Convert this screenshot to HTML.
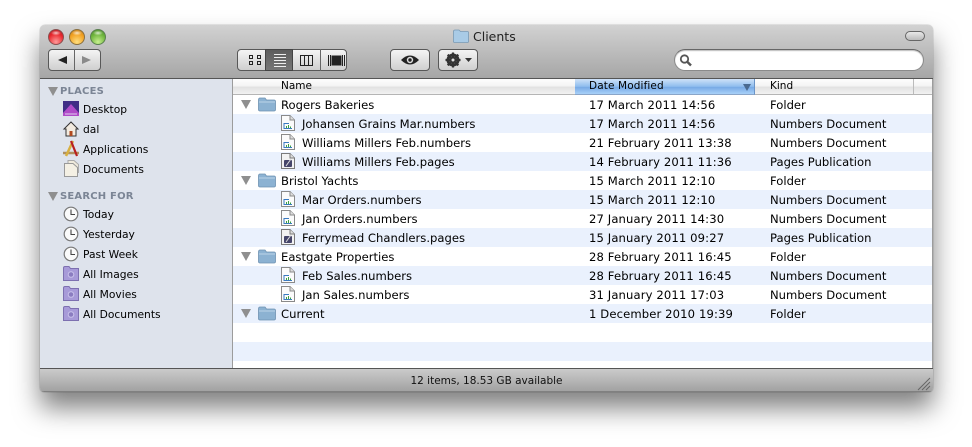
<!DOCTYPE html>
<html><head><meta charset="utf-8">
<style>
html,body{margin:0;padding:0;background:#fff}
body{width:972px;height:447px;overflow:hidden;position:relative;font-family:"DejaVu Sans","Liberation Sans",sans-serif;font-size:11.6px;color:#000}
.a{position:absolute}
#win{left:40px;top:25px;width:893px;height:367px;border-radius:5px 5px 4px 4px;overflow:hidden;box-shadow:0 16px 26px rgba(0,0,0,.5),0 0 1px rgba(0,0,0,.5)}
#top{left:0;top:0;width:893px;height:53px;background:linear-gradient(#d2d2d2,#a6a6a6);border-bottom:1px solid #555}
#side{left:0;top:54px;width:192px;height:289px;background:#dee3ec;border-right:1px solid #9c9c9c}
#main{left:193px;top:54px;width:699px;height:289px;background:#fff}
#edge{left:892px;top:54px;width:1px;height:289px;background:#9c9c9c}
#bot{left:0;top:343px;width:893px;height:24px;background:linear-gradient(#cbcbcb,#a2a2a2);border-top:1px solid #555;box-sizing:border-box;border-bottom:1px solid #808080}
.t{position:absolute;white-space:nowrap;line-height:14px}
#main .t{margin-top:1px}
#main .t[style*="left:356px"]{letter-spacing:.12px}
#side .t{font-size:10.7px;margin-top:1px}
#side .h{font-weight:bold;color:#7b8595;font-size:10px;letter-spacing:.2px;margin-top:1px}
.tri{position:absolute;width:0;height:0;border-left:5px solid transparent;border-right:5px solid transparent;border-top:9px solid #8f8f8f}
.btn{position:absolute;box-sizing:border-box;height:22px;top:24px;border:1px solid #585858;border-radius:4px;background:linear-gradient(#f4f4f4,#cfcfcf)}
.row{position:absolute;left:0;width:699px;height:19px}
.b{background:#eaf1fd}
svg{position:absolute;overflow:visible}
</style></head><body>
<div class="a" id="win">
<div class="a" id="top">
 <div class="a" style="left:8px;top:4px;width:14px;height:14px;border-radius:50%;background:radial-gradient(ellipse 5px 2.5px at 50% 3px,rgba(255,255,255,.75),rgba(255,255,255,0)),radial-gradient(circle at 50% 85%,#ff9a9a,#e8262c 60%,#a82028);border:.5px solid #8a5050;margin-left:-.5px"></div>
 <div class="a" style="left:29px;top:4px;width:14px;height:14px;border-radius:50%;background:radial-gradient(ellipse 5px 2.5px at 50% 3px,rgba(255,255,255,.75),rgba(255,255,255,0)),radial-gradient(circle at 50% 85%,#ffdf80,#f2a020 60%,#b87a20);border:.5px solid #8a7040;margin-left:-.5px"></div>
 <div class="a" style="left:50px;top:4px;width:14px;height:14px;border-radius:50%;background:radial-gradient(ellipse 5px 2.5px at 50% 3px,rgba(255,255,255,.75),rgba(255,255,255,0)),radial-gradient(circle at 50% 85%,#c8f090,#6cb33a 60%,#4f8a30);border:.5px solid #5a8050;margin-left:-.5px"></div>
 <svg style="left:413px;top:4px" width="16" height="14"><path d="M.5 2.5Q.5 1 2 1H6L7.5 2.5H14.5Q15.5 2.500 15.5 3.500V12.5Q15.5 13.5 14.5 13.5H1.5Q.5 13.5 .5 12.5Z" fill="#a9cbe6" stroke="#7a9ab5" stroke-width=".8"/></svg>
 <div class="t" style="left:433px;top:5px;font-size:12.5px;color:#222">Clients</div>
 <div class="a" style="left:865px;top:6px;width:18px;height:8px;border:1px solid #666;border-radius:5px;background:linear-gradient(#e8e8e8,#bbb)"></div>

 <div class="btn" style="left:8px;width:53px"></div>
 <div class="a" style="left:34px;top:24px;width:1px;height:22px;background:#666"></div>
 <svg style="left:18px;top:29px" width="12" height="12"><path d="M0 6L9 2V10Z" fill="#222"/></svg>
 <svg style="left:42px;top:29px" width="12" height="12"><path d="M9 6L0 2V10Z" fill="#8a8a8a"/></svg>

 <div class="btn" style="left:197px;width:110px"></div>
 <div class="a" style="left:225px;top:24px;width:28px;height:22px;background:linear-gradient(#5c5c5c,#777);box-shadow:inset 0 0 0 1px #444"></div>
 <div class="a" style="left:280px;top:24px;width:1px;height:22px;background:#666"></div>
 <svg style="left:197px;top:24px" width="110" height="22" fill="none" stroke-width="1" shape-rendering="crispEdges">
  <g stroke="#222"><rect x="12.5" y="6.5" width="3" height="3"/><rect x="20.5" y="6.5" width="3" height="3"/><rect x="12.5" y="12.5" width="3" height="3"/><rect x="20.5" y="12.5" width="3" height="3"/></g>
  <path stroke="#eee" d="M37 5.5H49M37 8.5H49M37 11.5H49M37 14.5H49M37 17.5H49"/>
  <g stroke="#222"><rect x="63.5" y="6.5" width="12" height="10"/><path d="M67.5 6.5V16.5M71.5 6.5V16.5"/></g>
  <g stroke="#222"><path d="M91.5 6V17M93.5 6V17M105.5 6V17M107.5 6V17"/><rect x="95" y="7" width="9" height="9" fill="#222"/></g>
 </svg>

 <div class="btn" style="left:350px;width:40px"></div>
 <svg style="left:350px;top:24px" width="40" height="22"><path d="M11 11Q20 2 29 11Q20 20 11 11Z" fill="#222"/><circle cx="20" cy="11" r="3.2" fill="#ddd"/><circle cx="20" cy="11" r="1.7" fill="#222"/></svg>
 <div class="btn" style="left:398px;width:40px"></div>
 <svg style="left:398px;top:24px" width="40" height="22"><circle cx="15" cy="11" r="5" fill="none" stroke="#333" stroke-width="3"/><path d="M15 3.5V18.5M7.5 11H22.500M9.700 5.700L20.300 16.300M20.300 5.700L9.700 16.300" stroke="#333" stroke-width="2.200"/><circle cx="15" cy="11" r="1.500" fill="#ddd"/><path d="M27 9H34L30.500 13Z" fill="#333"/></svg>

 <div class="a" style="left:634px;top:24px;width:250px;height:22px;box-sizing:border-box;border-radius:11px;background:#fff;border:1px solid #8a8a8a;border-top-color:#666;box-shadow:inset 0 1px 1px #bbb"></div>
 <svg style="left:638px;top:28px" width="16" height="15" fill="none" stroke="#555"><circle cx="6.500" cy="6" r="3.700" stroke-width="1.800"/><path d="M9.500 9L13 12.500" stroke-width="2.400"/></svg>
</div>

<div class="a" id="side">
 <div class="tri" style="left:8px;top:8px"></div>
 <div class="t h" style="left:20px;top:5px">PLACES</div>

 <svg style="left:23px;top:22px" width="16" height="16"><rect width="16" height="15" fill="#3f2d86"/><path d="M0 12L8 3L16 12V15H0Z" fill="#b04cc8"/><path d="M2 13H14" stroke="#e0d0f0"/></svg>
 <div class="t" style="left:43px;top:23px">Desktop</div>

 <svg style="left:23px;top:42px" width="16" height="16"><path d="M8 1L1 8H3V15H13V8H15Z" fill="#f2ebe0" stroke="#333"/><rect x="6.500" y="10" width="3" height="5" fill="#b04a20"/></svg>
 <div class="t" style="left:43px;top:43px">dal</div>

 <svg style="left:22px;top:61px" width="18" height="17"><path d="M1 13H17" stroke="#b09060" stroke-width="2.500"/><path d="M4 16L11 1" stroke="#d8b040" stroke-width="2.500"/><path d="M9 1L15 16" stroke="#b82020" stroke-width="2.200"/></svg>
 <div class="t" style="left:43px;top:63px">Applications</div>

 <svg style="left:24px;top:81px" width="15" height="17"><path d="M4 3V.5H10L14.500 4.500V13" fill="#efeadc" stroke="#aaa"/><path d="M.5 3.500H9L13.500 7.500V16.500H.5Z" fill="#f4f0e4" stroke="#999"/></svg>
 <div class="t" style="left:43px;top:83px">Documents</div>

 <div class="tri" style="left:8px;top:113px"></div>
 <div class="t h" style="left:20px;top:110px">SEARCH FOR</div>

 <svg style="left:23px;top:127px" width="16" height="16"><use href="#clk"/></svg>
 <div class="t" style="left:43px;top:128px">Today</div>
 <svg style="left:23px;top:147px" width="16" height="16"><use href="#clk"/></svg>
 <div class="t" style="left:43px;top:148px">Yesterday</div>
 <svg style="left:23px;top:167px" width="16" height="16"><use href="#clk"/></svg>
 <div class="t" style="left:43px;top:168px">Past Week</div>

 <svg style="left:23px;top:187px" width="16" height="15"><use href="#sf"/></svg>
 <div class="t" style="left:43px;top:188px">All Images</div>
 <svg style="left:23px;top:207px" width="16" height="15"><use href="#sf"/></svg>
 <div class="t" style="left:43px;top:208px">All Movies</div>
 <svg style="left:23px;top:227px" width="16" height="15"><use href="#sf"/></svg>
 <div class="t" style="left:43px;top:228px">All Documents</div>
</div>

<div class="a" id="edge"></div>
<div class="a" id="main">
 <div class="a" style="left:0;top:0;width:699px;height:15px;background:linear-gradient(#fdfdfd,#f4f4f4 45%,#e2e2e2 55%,#f2f2f2);border-bottom:1px solid #b5b5b5"></div>
 <div class="a" style="left:342px;top:0;width:179px;height:15px;background:linear-gradient(#cfe2f8,#8fbdee 50%,#78aae6 55%,#a8d0f8);border-bottom:1px solid #8aa5c8;border-right:1px solid #6a94c8"></div>
 <div class="a" style="left:680px;top:0;width:1px;height:15px;background:#bbb"></div>
 <div class="t" style="left:48px;top:-1px;font-size:10.5px">Name</div>
 <div class="t" style="left:356px;top:-1px;font-size:10.5px">Date Modified</div>
 <svg style="left:510px;top:5px" width="9" height="8"><path d="M0 0H8L4 7Z" fill="#4a6a90"/></svg>
 <div class="t" style="left:537px;top:-1px;font-size:10.5px">Kind</div>

 <div class="row b" style="top:35px"></div><div class="row b" style="top:73px"></div><div class="row b" style="top:111px"></div><div class="row b" style="top:149px"></div><div class="row b" style="top:187px"></div><div class="row b" style="top:225px"></div><div class="row b" style="top:263px"></div>

 <div class="tri" style="left:8px;top:21px"></div><svg style="left:25px;top:18px" width="18" height="15"><use href="#fd"/></svg>
 <div class="t" style="left:48px;top:18px">Rogers Bakeries</div><div class="t" style="left:356px;top:18px">17 March 2011 14:56</div><div class="t" style="left:537px;top:18px">Folder</div>

 <svg style="left:48px;top:36px" width="14" height="16"><use href="#nu"/></svg>
 <div class="t" style="left:69px;top:37px">Johansen Grains Mar.numbers</div><div class="t" style="left:356px;top:37px">17 March 2011 14:56</div><div class="t" style="left:537px;top:37px">Numbers Document</div>

 <svg style="left:48px;top:55px" width="14" height="16"><use href="#nu"/></svg>
 <div class="t" style="left:69px;top:56px">Williams Millers Feb.numbers</div><div class="t" style="left:356px;top:56px">21 February 2011 13:38</div><div class="t" style="left:537px;top:56px">Numbers Document</div>

 <svg style="left:48px;top:74px" width="14" height="16"><use href="#pa"/></svg>
 <div class="t" style="left:69px;top:75px">Williams Millers Feb.pages</div><div class="t" style="left:356px;top:75px">14 February 2011 11:36</div><div class="t" style="left:537px;top:75px">Pages Publication</div>

 <div class="tri" style="left:8px;top:97px"></div><svg style="left:25px;top:94px" width="18" height="15"><use href="#fd"/></svg>
 <div class="t" style="left:48px;top:94px">Bristol Yachts</div><div class="t" style="left:356px;top:94px">15 March 2011 12:10</div><div class="t" style="left:537px;top:94px">Folder</div>

 <svg style="left:48px;top:112px" width="14" height="16"><use href="#nu"/></svg>
 <div class="t" style="left:69px;top:113px">Mar Orders.numbers</div><div class="t" style="left:356px;top:113px">15 March 2011 12:10</div><div class="t" style="left:537px;top:113px">Numbers Document</div>

 <svg style="left:48px;top:131px" width="14" height="16"><use href="#nu"/></svg>
 <div class="t" style="left:69px;top:132px">Jan Orders.numbers</div><div class="t" style="left:356px;top:132px">27 January 2011 14:30</div><div class="t" style="left:537px;top:132px">Numbers Document</div>

 <svg style="left:48px;top:150px" width="14" height="16"><use href="#pa"/></svg>
 <div class="t" style="left:69px;top:151px">Ferrymead Chandlers.pages</div><div class="t" style="left:356px;top:151px">15 January 2011 09:27</div><div class="t" style="left:537px;top:151px">Pages Publication</div>

 <div class="tri" style="left:8px;top:173px"></div><svg style="left:25px;top:170px" width="18" height="15"><use href="#fd"/></svg>
 <div class="t" style="left:48px;top:170px">Eastgate Properties</div><div class="t" style="left:356px;top:170px">28 February 2011 16:45</div><div class="t" style="left:537px;top:170px">Folder</div>

 <svg style="left:48px;top:188px" width="14" height="16"><use href="#nu"/></svg>
 <div class="t" style="left:69px;top:189px">Feb Sales.numbers</div><div class="t" style="left:356px;top:189px">28 February 2011 16:45</div><div class="t" style="left:537px;top:189px">Numbers Document</div>

 <svg style="left:48px;top:207px" width="14" height="16"><use href="#nu"/></svg>
 <div class="t" style="left:69px;top:208px">Jan Sales.numbers</div><div class="t" style="left:356px;top:208px">31 January 2011 17:03</div><div class="t" style="left:537px;top:208px">Numbers Document</div>

 <div class="tri" style="left:8px;top:230px"></div><svg style="left:25px;top:227px" width="18" height="15"><use href="#fd"/></svg>
 <div class="t" style="left:48px;top:227px">Current</div><div class="t" style="left:356px;top:227px">1 December 2010 19:39</div><div class="t" style="left:537px;top:227px">Folder</div>
</div>

<div class="a" id="bot">
 <div class="t" style="left:0;width:893px;text-align:center;top:5px;font-size:10.5px;color:#111">12 items, 18.53 GB available</div>
 <svg style="left:877px;top:8px" width="14" height="14" stroke="#666" fill="none"><path d="M1 13L13 1M5 13L13 5M9 13L13 9"/></svg>
</div>
</div>

<svg width="0" height="0" style="position:absolute"><defs>
 <g id="clk"><circle cx="8" cy="8" r="6.800" fill="#fafafa" stroke="#777" stroke-width="1.200"/><path d="M8 3.500V8.500H12" fill="none" stroke="#444" stroke-width="1.100"/></g>
 <g id="sf"><path d="M.5 2Q.5 .5 2 .5H6L7.500 2.500H15.500V14.500H.5Z" fill="#a79ad8" stroke="#7d70b0"/><circle cx="8" cy="8.500" r="2.800" fill="#8a7cc0" stroke="#c8c0ea"/></g>
 <g id="fd"><path d="M.5 3Q.5 1 2 1H7L8.500 3H16Q17.500 3 17.500 4.500V12.500Q17.500 14 16 14H2Q.5 14 .5 12.500Z" fill="#8cb2d2" stroke="#6f92b2" stroke-width=".8"/><path d="M1 5H17" stroke="#bcd4e8"/></g>
 <g id="nu"><path d="M.5 .5H9L13.500 5V15.500H.5Z" fill="#fbfbfb" stroke="#8a8a8a"/><path d="M9 .5V5H13.500" fill="#ddd" stroke="#8a8a8a"/><path d="M3 8.500H8" stroke="#3a7ac0"/><path d="M3 8V13.500H11" fill="none" stroke="#3a7ac0"/><path d="M5.500 13V11M7.500 13V10M9.500 13V11.500" stroke="#3aa040"/></g>
 <g id="pa"><path d="M.5 .5H9L13.500 5V15.500H.5Z" fill="#f2f2f2" stroke="#7a7a7a"/><path d="M9 .5V5H13.500" fill="#ddd" stroke="#7a7a7a"/><rect x="3" y="7" width="8" height="7" rx="1" fill="#45456a"/><path d="M5 13L10 6" stroke="#ddd"/></g>
</defs></svg>
</body></html>
